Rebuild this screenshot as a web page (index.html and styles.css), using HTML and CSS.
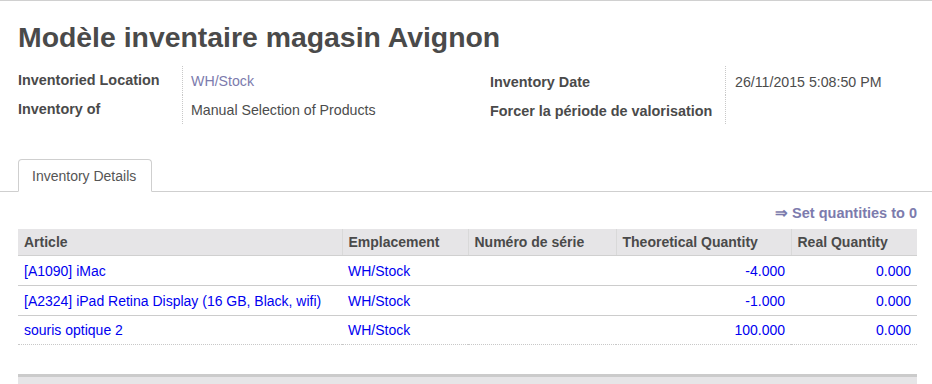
FILE: index.html
```html
<!DOCTYPE html>
<html lang="fr">
<head>
<meta charset="utf-8">
<title>Modèle inventaire magasin Avignon</title>
<link rel="stylesheet" href="styles.css">
</head>
<body>
<div class="sheet">
  <h1 class="title">Modèle inventaire magasin Avignon</h1>
  <div class="group">
    <div class="lbl">Inventoried Location</div>
    <div class="val link">WH/Stock</div>
    <div class="lbl lbl-r">Inventory Date</div>
    <div class="val val-r">26/11/2015 5:08:50 PM</div>
    <div class="lbl">Inventory of</div>
    <div class="val">Manual Selection of Products</div>
    <div class="lbl lbl-r">Forcer la période de valorisation</div>
    <div class="val val-r"></div>
  </div>
</div>
<div class="tabbar">
  <div class="tab">Inventory Details</div>
</div>
<div class="sheet">
  <div class="actions"><span class="action">⇒ Set quantities to 0</span></div>
  <table class="lines">
    <colgroup>
      <col class="c-article"><col class="c-loc"><col class="c-lot"><col class="c-theo"><col class="c-real">
    </colgroup>
    <thead>
      <tr>
        <th>Article</th>
        <th>Emplacement</th>
        <th>Numéro de série</th>
        <th>Theoretical Quantity</th>
        <th>Real Quantity</th>
      </tr>
    </thead>
    <tbody>
      <tr><td>[A1090] iMac</td><td>WH/Stock</td><td></td><td class="num">-4.000</td><td class="num">0.000</td></tr>
      <tr><td>[A2324] iPad Retina Display (16 GB, Black, wifi)</td><td>WH/Stock</td><td></td><td class="num">-1.000</td><td class="num">0.000</td></tr>
      <tr class="last"><td>souris optique 2</td><td>WH/Stock</td><td></td><td class="num">100.000</td><td class="num">0.000</td></tr>
    </tbody>
  </table>
  <div class="tfoot"></div>
</div>
</body>
</html>
```
FILE: styles.css
```css
html, body {
  margin: 0;
  padding: 0;
  background: #fff;
}
body {
  border-top: 1px solid #d0d0d0;
  font-family: "Liberation Sans", Arial, sans-serif;
  font-size: 14px;
  color: #4c4c4c;
  width: 932px;
  height: 383px;
  overflow: hidden;
}
.sheet {
  padding: 0 15px 0 18px;
}
.title {
  margin: 0;
  padding-top: 17px;
  height: 47px;
  font-size: 28.4px;
  line-height: 38px;
  font-weight: bold;
  color: #4a4a4a;
}
.group {
  display: grid;
  grid-template-columns: 164px 308px 235px 1fr;
  grid-auto-rows: 29px;
  margin-top: 1px;
}
.lbl {
  font-weight: bold;
  font-size: 14.4px;
  color: #4a4a4a;
  line-height: 29px;
}
.val {
  border-left: 1px dotted #c8c8c8;
  padding-left: 8px;
  line-height: 29px;
  padding-top: 1px;
  font-size: 14.2px;
}
.lbl-r, .val-r {
  padding-top: 2px;
  line-height: 29px;
}
.val-r {
  padding-left: 9px;
}
.link {
  color: #7c7bad;
}
.tabbar {
  margin-top: 35px;
  border-bottom: 1px solid #cfcfcf;
  height: 32px;
  display: flex;
  align-items: flex-end;
  padding-left: 18px;
}
.tab {
  box-sizing: border-box;
  width: 134px;
  height: 33px;
  margin-bottom: -1px;
  border: 1px solid #cfcfcf;
  border-bottom: 1px solid #fff;
  border-radius: 4px 4px 0 0;
  background: #fff;
  padding-left: 13px;
  line-height: 32px;
  font-size: 14px;
  color: #555;
}
.actions {
  display: flex;
  justify-content: flex-end;
  height: 37px;
  padding-top: 11px;
  box-sizing: border-box;
}
.action {
  font-weight: bold;
  color: #7c7bad;
  font-size: 14.5px;
  line-height: 20px;
}
.lines {
  width: 899px;
  border-collapse: collapse;
  table-layout: fixed;
}
.c-article { width: 324px; }
.c-loc { width: 126px; }
.c-lot { width: 148px; }
.c-theo { width: 175px; }
.c-real { width: 126px; }
.lines th {
  background: #e6e5e7;
  height: 26px;
  padding: 0 6px;
  text-align: left;
  font-weight: bold;
  font-size: 14px;
  color: #4a4a4a;
  border-left: 1px solid #d9d9d9;
  border-bottom: 1px solid #d0d0d0;
  white-space: nowrap;
}
.lines th:first-child {
  border-left: none;
}
.lines td {
  height: 29px;
  padding: 0 6px;
  color: #0000f0;
  border-bottom: 1px solid #cccccc;
  white-space: nowrap;
  font-size: 14px;
}
.lines tr.last td {
  border-bottom: 1px dotted #c8c8c8;
  height: 28px;
}
.lines td.num {
  text-align: right;
}
.tfoot {
  width: 899px;
  margin-top: 29px;
  height: 8px;
  border-top: 3px solid #cbcbcb;
  border-bottom: 1px solid #d0d0d0;
  background: #e6e5e7;
}
```
